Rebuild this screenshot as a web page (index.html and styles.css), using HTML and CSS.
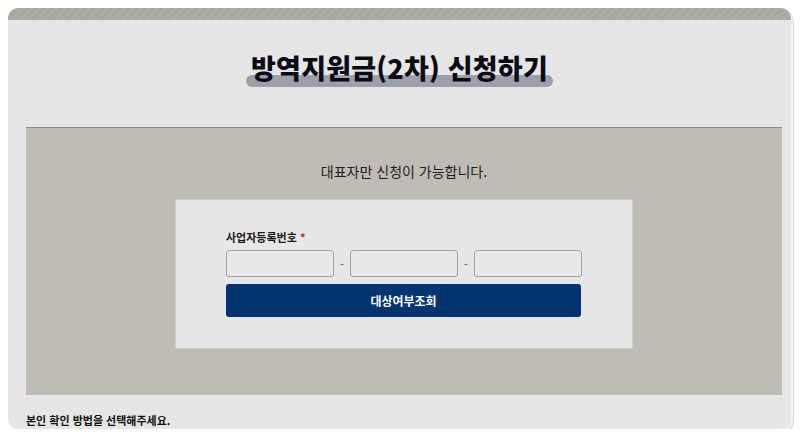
FILE: index.html
```html
<!DOCTYPE html>
<html lang="ko">
<head>
<meta charset="utf-8">
<title>방역지원금(2차) 신청하기</title>
<link rel="stylesheet" href="styles.css">
</head>
<body>
<div class="card">
  <div class="topbar"></div>
  <div class="title-wrap">
    <h1 class="title"><span class="title-text">방역지원금(2차) 신청하기</span></h1>
  </div>
  <section class="panel">
    <p class="notice">대표자만 신청이 가능합니다.</p>
    <div class="form-box">
      <div class="label">사업자등록번호 <span class="req">*</span></div>
      <div class="inputs">
        <input class="field" type="text">
        <span class="dash">-</span>
        <input class="field" type="text">
        <span class="dash">-</span>
        <input class="field" type="text">
      </div>
      <button class="btn" type="button">대상여부조회</button>
    </div>
  </section>
  <p class="bottom-text">본인 확인 방법을 선택해주세요.</p>
</div>
</body>
</html>
```

FILE: styles.css
```css
html, body {
  margin: 0;
  padding: 0;
  background: #ffffff;
}
body {
  font-family: "Noto Sans CJK KR", "Noto Sans", sans-serif;
  color: #1a1a1a;
}
.card {
  margin: 8px 0 0 8px;
  width: 783px;
  height: 421px;
  background: #e6e6e6;
  border-radius: 10px;
  overflow: hidden;
  box-shadow: 2px 2px 0 #f0f0f0, 3px 3px 0 #dcdcdc;
}
.topbar {
  height: 12px;
  background: repeating-linear-gradient(135deg, #a8a79f 0 3px, #adaca4 3px 6px);
}
.title-wrap {
  display: flex;
  justify-content: center;
  padding-top: 29px;
  height: 88px;
  box-sizing: border-box;
}
.title {
  margin: 0;
  font-size: 27px;
  line-height: 38px;
  font-weight: 900;
  color: #0b0b14;
  letter-spacing: 0.2px;
}
.title-text {
  position: relative;
  z-index: 0;
  display: inline-block;
  padding: 0 5px;
}
.title-text::before {
  content: "";
  position: absolute;
  left: 0;
  right: 0;
  bottom: 0;
  height: 12px;
  border-radius: 6px;
  background: #9ba0aa;
  z-index: -1;
}
.panel {
  margin: 19px 9px 0 18px;
  height: 268px;
  background: #bfbbb5;
  border-top: 1px solid #8d8a85;
  box-sizing: border-box;
  padding-top: 33px;
  display: flex;
  flex-direction: column;
  align-items: center;
}
.notice {
  margin: 0;
  font-size: 14px;
  line-height: 20px;
  color: #1e1e1e;
}
.form-box {
  margin-top: 18px;
  width: 458px;
  height: 150px;
  box-sizing: border-box;
  background: #e7e7e7;
  border: 1px solid #d2cfca;
  padding: 29px 0 0 50px;
}
.label {
  font-size: 11px;
  line-height: 16px;
  font-weight: 700;
  color: #1a1a1a;
}
.req {
  color: #c41c1c;
}
.inputs {
  display: flex;
  align-items: center;
  margin-top: 5px;
}
.field {
  width: 108px;
  height: 27px;
  box-sizing: border-box;
  border: 1px solid #a3a19b;
  border-radius: 3px;
  background: #e8e8e8;
  margin: 0;
  padding: 0;
}
.dash {
  width: 16px;
  text-align: center;
  font-size: 11px;
  color: #555;
}
.btn {
  display: block;
  margin-top: 7px;
  width: 355px;
  height: 33px;
  border: none;
  border-radius: 3px;
  background: #013470;
  color: #ffffff;
  font-family: "Noto Sans CJK KR", "Noto Sans", sans-serif;
  font-size: 12px;
  font-weight: 700;
  padding: 0;
}
.bottom-text {
  margin: 18px 0 0 18px;
  font-size: 11px;
  line-height: 14px;
  font-weight: 700;
  color: #111;
}
```
